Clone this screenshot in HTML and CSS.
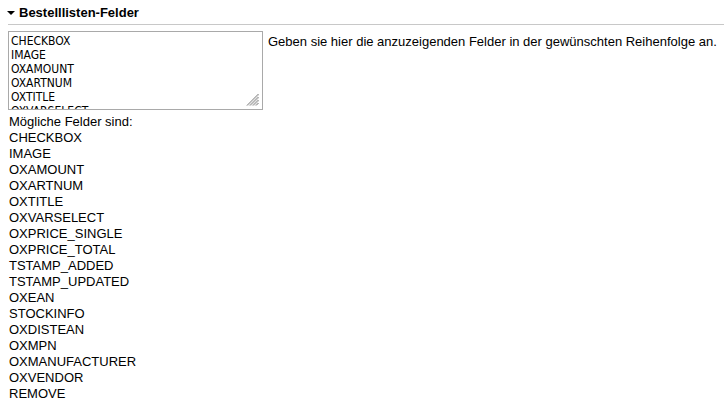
FILE: index.html
```html
<!DOCTYPE html>
<html>
<head>
<meta charset="utf-8">
<link rel="stylesheet" href="styles.css">
</head>
<body>
<div class="section">
  <div class="head"><span class="tri"></span><span class="title">Bestelllisten-Felder</span></div>
  <div class="row">
    <div class="tawrap">
      <textarea class="fields">CHECKBOX
IMAGE
OXAMOUNT
OXARTNUM
OXTITLE
OXVARSELECT
OXPRICE_SINGLE
OXPRICE_TOTAL</textarea>
      <svg class="grip" width="13" height="13" viewBox="0 0 13 13">
        <g stroke="#6e6e6e" stroke-width="1">
          <line x1="1" y1="12.5" x2="12.5" y2="1"/>
          <line x1="4" y1="12.5" x2="12.5" y2="4"/>
          <line x1="7" y1="12.5" x2="12.5" y2="7"/>
          <line x1="10" y1="12.5" x2="12.5" y2="10"/>
        </g>
        <g stroke="#c8c8c8" stroke-width="1">
          <line x1="2" y1="12.5" x2="12.5" y2="2"/>
          <line x1="5" y1="12.5" x2="12.5" y2="5"/>
          <line x1="8" y1="12.5" x2="12.5" y2="8"/>
        </g>
      </svg>
    </div>
    <div class="help">Geben sie hier die anzuzeigenden Felder in der gewünschten Reihenfolge an.</div>
  </div>
  <div class="list">
    <div>Mögliche Felder sind:</div>
    <div>CHECKBOX</div>
    <div>IMAGE</div>
    <div>OXAMOUNT</div>
    <div>OXARTNUM</div>
    <div>OXTITLE</div>
    <div>OXVARSELECT</div>
    <div>OXPRICE_SINGLE</div>
    <div>OXPRICE_TOTAL</div>
    <div>TSTAMP_ADDED</div>
    <div>TSTAMP_UPDATED</div>
    <div>OXEAN</div>
    <div>STOCKINFO</div>
    <div>OXDISTEAN</div>
    <div>OXMPN</div>
    <div>OXMANUFACTURER</div>
    <div>OXVENDOR</div>
    <div>REMOVE</div>
  </div>
</div>
</body>
</html>
```
FILE: styles.css
```css
html, body { margin: 0; padding: 0; background: #fff; }
body { font-family: "Liberation Sans", Arial, sans-serif; font-size: 13px; color: #000; }
.section { padding: 0 0 0 8px; }
.head { display: flex; align-items: center; height: 25px; border-bottom: 1px solid #c8c8c8; box-sizing: border-box; }
.tri { width: 0; height: 0; border-left: 4px solid transparent; border-right: 4px solid transparent; border-top: 4px solid #000; margin: 1px 4px 0 -1px; }
.title { font-weight: bold; font-size: 13px; }
.row { display: flex; align-items: flex-start; margin-top: 6px; }
.tawrap { position: relative; width: 255px; height: 79px; }
.fields { display: block; width: 255px; height: 79px; box-sizing: border-box; margin: 0; padding: 2px 2px; border: 1px solid #a9a9a9; font-family: "Liberation Sans Narrow", "DejaVu Sans Condensed", sans-serif; font-size: 12px; line-height: 14px; resize: none; overflow: hidden; color: #000; }
.grip { position: absolute; right: 4px; bottom: 4px; }
.help { margin-left: 5px; padding-top: 3px; line-height: 16px; }
.list { margin-top: 4px; padding-left: 1px; line-height: 16px; }
```
